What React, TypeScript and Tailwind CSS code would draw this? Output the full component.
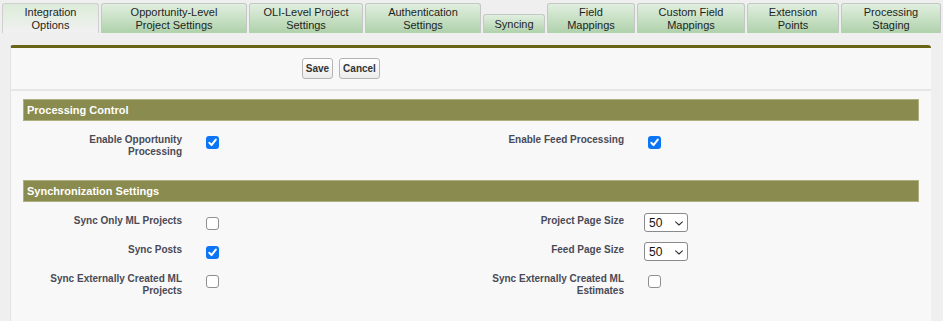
import React from "react";

type Tab = { lines: string[]; w: string; active?: boolean; short?: boolean };

const tabs: Tab[] = [
  { lines: ["Integration", "Options"], w: "w-[97px]", active: true },
  { lines: ["Opportunity-Level", "Project Settings"], w: "w-[146px]" },
  { lines: ["OLI-Level Project", "Settings"], w: "w-[114px]" },
  { lines: ["Authentication", "Settings"], w: "w-[116px]" },
  { lines: ["Syncing"], w: "w-[62px]", short: true },
  { lines: ["Field", "Mappings"], w: "w-[88px]" },
  { lines: ["Custom Field", "Mappings"], w: "w-[108px]" },
  { lines: ["Extension", "Points"], w: "w-[92px]" },
  { lines: ["Processing", "Staging"], w: "w-[100px]" },
];

function Checkbox({ checked }: { checked?: boolean }) {
  if (checked) {
    return (
      <div className="mt-[4px] ml-[4px] flex h-[13px] w-[13px] items-center justify-center rounded-[3px] bg-[#0b75f5]">
        <svg width="13" height="13" viewBox="0 0 13 13">
          <path d="M3.3 6.8 L5.5 9.1 L9.8 3.6" fill="none" stroke="#ffffff" strokeWidth="2" strokeLinecap="round" strokeLinejoin="round" />
        </svg>
      </div>
    );
  }
  return <div className="mt-[4px] ml-[4px] h-[13px] w-[13px] rounded-[3px] border border-[#8f8f8f] bg-white" />;
}

function Select({ value }: { value: string }) {
  return (
    <div className="flex h-[19px] w-[44px] items-center justify-between rounded-[3px] border border-[#8a8a8a] bg-white pl-[4px] pr-[4px] text-[12px] leading-[14px] text-[#111]">
      <span>{value}</span>
      <svg width="8" height="5" viewBox="0 0 8 5" className="mt-[1px]">
        <path d="M0.6 0.8 L4 4 L7.4 0.8" fill="none" stroke="#333" strokeWidth="1.1" strokeLinecap="round" strokeLinejoin="round" />
      </svg>
    </div>
  );
}

function Label({ children }: { children: React.ReactNode }) {
  return (
    <div className="pt-[2px] pr-[10px] text-right text-[10px] font-bold leading-[12px] text-[#4a4a56]">{children}</div>
  );
}

function Data({ children }: { children?: React.ReactNode }) {
  return <div className="pl-[10px]">{children}</div>;
}

function SectionHeader({ title }: { title: string }) {
  return (
    <div className="mx-[12px] flex h-[22px] items-center border border-[#aeb07f] bg-[#8a8b4e] pl-[3px] text-[11px] font-bold text-white">
      {title}
    </div>
  );
}

export default function App() {
  return (
    <div className="min-h-[321px] w-[943px] overflow-hidden bg-[#efefef] font-['Liberation_Sans',Arial,sans-serif]">
      {/* Tabs */}
      <div className="flex h-[33px] items-end gap-[2px] pl-[2px]">
        {tabs.map((t, i) => (
          <div
            key={i}
            className={[
              "flex shrink-0 flex-col items-center justify-center rounded-t-[3px] border border-b-0 text-center text-[11px] leading-[13px] text-[#1e1e1e]",
              t.w,
              t.short ? "h-[19px] pt-[1px]" : "h-[30px]",
              t.active
                ? "border-[#cfcfcf] bg-linear-to-b from-[#dcecd9] to-[#f1f1f1]"
                : "border-[#c4c8c4] bg-linear-to-b from-[#e1efdf] to-[#afd1ab]",
            ].join(" ")}
          >
            {t.lines.map((l, j) => (
              <span key={j} className="whitespace-nowrap">
                {l}
              </span>
            ))}
          </div>
        ))}
      </div>

      {/* Panel */}
      <div className="ml-[10px] mt-[12px] w-[921px] rounded-t-[3px] border-t-[3px] border-l border-t-[#6a6416] border-l-[#e3e3e3] bg-[#f8f8f8] pb-[30px]">
        {/* Buttons */}
        <div className="flex h-[43px] items-center gap-[6px] border-b-2 border-[#e6e6e6] pl-[291px]">
          <button className="h-[21px] w-[31px] rounded-[3px] border border-[#b4b4b4] bg-linear-to-b from-white to-[#ececec] text-[10px] font-bold text-[#333]">
            Save
          </button>
          <button className="h-[21px] w-[41px] rounded-[3px] border border-[#b4b4b4] bg-linear-to-b from-white to-[#ececec] text-[10px] font-bold text-[#333]">
            Cancel
          </button>
        </div>

        <div className="mt-[8px]">
          <SectionHeader title="Processing Control" />
          <div className="mx-[12px] grid grid-cols-[169px_273px_169px_1fr] items-start pt-[11px] pb-[22px]">
            <Label>
              Enable Opportunity
              <br />
              Processing
            </Label>
            <Data>
              <Checkbox checked />
            </Data>
            <Label>Enable Feed Processing</Label>
            <Data>
              <Checkbox checked />
            </Data>
          </div>

          <SectionHeader title="Synchronization Settings" />
          <div className="mx-[12px] grid grid-cols-[169px_273px_169px_1fr] items-start gap-y-[10px] pt-[11px]">
            <Label>Sync Only ML Projects</Label>
            <Data>
              <Checkbox />
            </Data>
            <Label>Project Page Size</Label>
            <Data>
              <Select value="50" />
            </Data>

            <Label>Sync Posts</Label>
            <Data>
              <Checkbox checked />
            </Data>
            <Label>Feed Page Size</Label>
            <Data>
              <Select value="50" />
            </Data>

            <Label>
              Sync Externally Created ML
              <br />
              Projects
            </Label>
            <Data>
              <Checkbox />
            </Data>
            <Label>
              Sync Externally Created ML
              <br />
              Estimates
            </Label>
            <Data>
              <Checkbox />
            </Data>
          </div>
        </div>
      </div>
    </div>
  );
}
